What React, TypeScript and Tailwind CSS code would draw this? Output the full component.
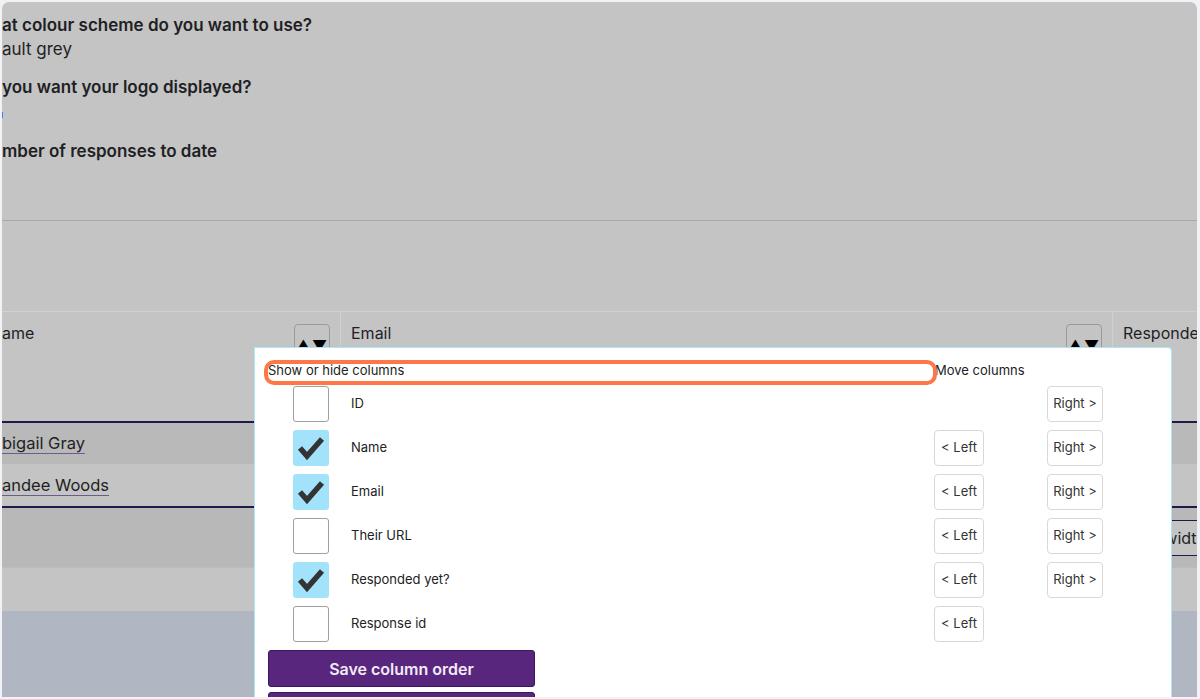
import React from "react";

const COLUMNS = [
  { label: "ID", on: false, left: false, right: true },
  { label: "Name", on: true, left: true, right: true },
  { label: "Email", on: true, left: true, right: true },
  { label: "Their URL", on: false, left: true, right: true },
  { label: "Responded yet?", on: true, left: true, right: true },
  { label: "Response id", on: false, left: true, right: false },
];

function SortButton() {
  return (
    <span className="flex h-[36px] w-[36px] items-center justify-center rounded-[4px] border border-[#9a9a9a] pt-[6px] text-[15px] leading-none tracking-[1px] text-black">
      ▲▼
    </span>
  );
}

function Checkbox({ on }: { on: boolean }) {
  if (on) {
    return (
      <span className="flex h-[36px] w-[36px] items-center justify-center rounded-[3px] bg-[#a3e2fb]">
        <svg width="36" height="36" viewBox="0 0 36 36">
          <polyline points="7,18 14,26 29,9" fill="none" stroke="#333" strokeWidth="5.5" />
        </svg>
      </span>
    );
  }
  return <span className="block h-[36px] w-[36px] rounded-[3px] border-[1.5px] border-[#a0a0a0] bg-white" />;
}

function MoveButton({ children, w }: { children: React.ReactNode; w: string }) {
  return (
    <button className={`flex h-[36px] ${w} items-center justify-center rounded-[4px] border border-[#d8d8d8] bg-white text-[13px] text-[#333]`}>
      {children}
    </button>
  );
}

export default function App() {
  return (
    <div className="h-[699px] w-[1200px] overflow-hidden bg-[#f2f2f6] pb-[2px] pl-[2px] pr-[3px] pt-[2px] font-['Inter','Liberation_Sans',sans-serif] text-[#1f1f24]">
      <div className="relative flex h-full flex-col overflow-hidden rounded-t-[7px] bg-[#c4c4c4]">
        {/* survey summary */}
        <div className="h-[219px] shrink-0 border-b border-[#a9a9a9] pt-[11px] text-[17px] leading-[24px]">
          <div className="font-semibold">at colour scheme do you want to use?</div>
          <div>ault grey</div>
          <div className="mt-[14px] font-semibold">you want your logo displayed?</div>
          <div className="h-[40px] pt-[13px]">
            <span className="block h-[6px] w-[1px] bg-[#3b82f6]" />
          </div>
          <div className="font-semibold">mber of responses to date</div>
        </div>

        <div className="h-[90px] shrink-0" />

        {/* table header */}
        <div className="flex h-[112px] shrink-0 border-b-2 border-t border-b-[#1e1a4a] border-t-[#d0d0d0] text-[16px]">
          <div className="flex w-[339px] shrink-0 items-start justify-between border-r border-[#d0d0d0] pr-[10px] pt-[10px]">
            <span className="leading-[22px]">ame</span>
            <span className="mt-[2px]">
              <SortButton />
            </span>
          </div>
          <div className="flex w-[772px] shrink-0 items-start justify-between border-r border-[#d0d0d0] pl-[10px] pr-[10px] pt-[10px]">
            <span className="leading-[22px]">Email</span>
            <span className="mt-[2px]">
              <SortButton />
            </span>
          </div>
          <div className="shrink-0 whitespace-nowrap pl-[10px] pt-[10px] leading-[22px]">Responded yet?</div>
        </div>

        {/* rows */}
        <div className="flex h-[41px] shrink-0 items-center bg-[#b9b9b9] text-[16.5px]">
          <span className="underline decoration-[#6c5c8c] underline-offset-[4px]">bigail Gray</span>
        </div>
        <div className="flex h-[44px] shrink-0 items-center border-b-2 border-[#1e1a4a] bg-[#c4c4c4] text-[16.5px]">
          <span className="underline decoration-[#6c5c8c] underline-offset-[4px]">andee Woods</span>
        </div>

        <div className="flex h-[59px] shrink-0 items-center bg-[#b8b8b8]">
          <div className="ml-[1071px] flex h-[36px] shrink-0 items-center whitespace-nowrap border-y border-[#1e1a4a] bg-[#c4c4c4] px-[2px] text-[16px]">
            Set column widths
          </div>
        </div>
        <div className="h-[44px] shrink-0 border-t border-[#bcbcbc] bg-[#c4c4c4]" />
        <div className="flex-1 bg-[#b0b6c2]" />

        {/* column chooser popup */}
        <div className="absolute left-[252px] top-[345px] h-[400px] w-[918px] rounded-tr-[4px] border border-[#ade4f6] bg-white px-[13px] pt-[15px] text-[13px] text-[#222]">
          <div className="pointer-events-none absolute left-[9px] top-[12px] h-[25px] w-[673px] rounded-[10px] border-[4px] border-[#ff7747]" />
          <div className="flex h-[16px] items-center">
            <span className="w-[667px]">Show or hide columns</span>
            <span>Move columns</span>
          </div>
          <div className="mt-[7px] flex flex-col gap-[8px]">
            {COLUMNS.map((c) => (
              <div key={c.label} className="flex h-[36px] items-center">
                <div className="flex w-[666px] items-center pl-[25px]">
                  <Checkbox on={c.on} />
                  <span className="ml-[22px]">{c.label}</span>
                </div>
                <div className="w-[113px]">{c.left && <MoveButton w="w-[50px]">&lt; Left</MoveButton>}</div>
                <div>{c.right && <MoveButton w="w-[56px]">Right &gt;</MoveButton>}</div>
              </div>
            ))}
          </div>
          <button className="mt-[8px] block h-[37px] w-[267px] rounded-[3px] border border-[#3a1560] bg-[#58267c] text-[16px] font-semibold text-[#f2eaf8]">
            Save column order
          </button>
          <button className="mt-[5px] block h-[37px] w-[267px] rounded-[3px] border border-[#3a1560] bg-[#58267c] text-[16px] font-semibold text-[#f2eaf8]">
            Reset
          </button>
        </div>
      </div>
    </div>
  );
}
